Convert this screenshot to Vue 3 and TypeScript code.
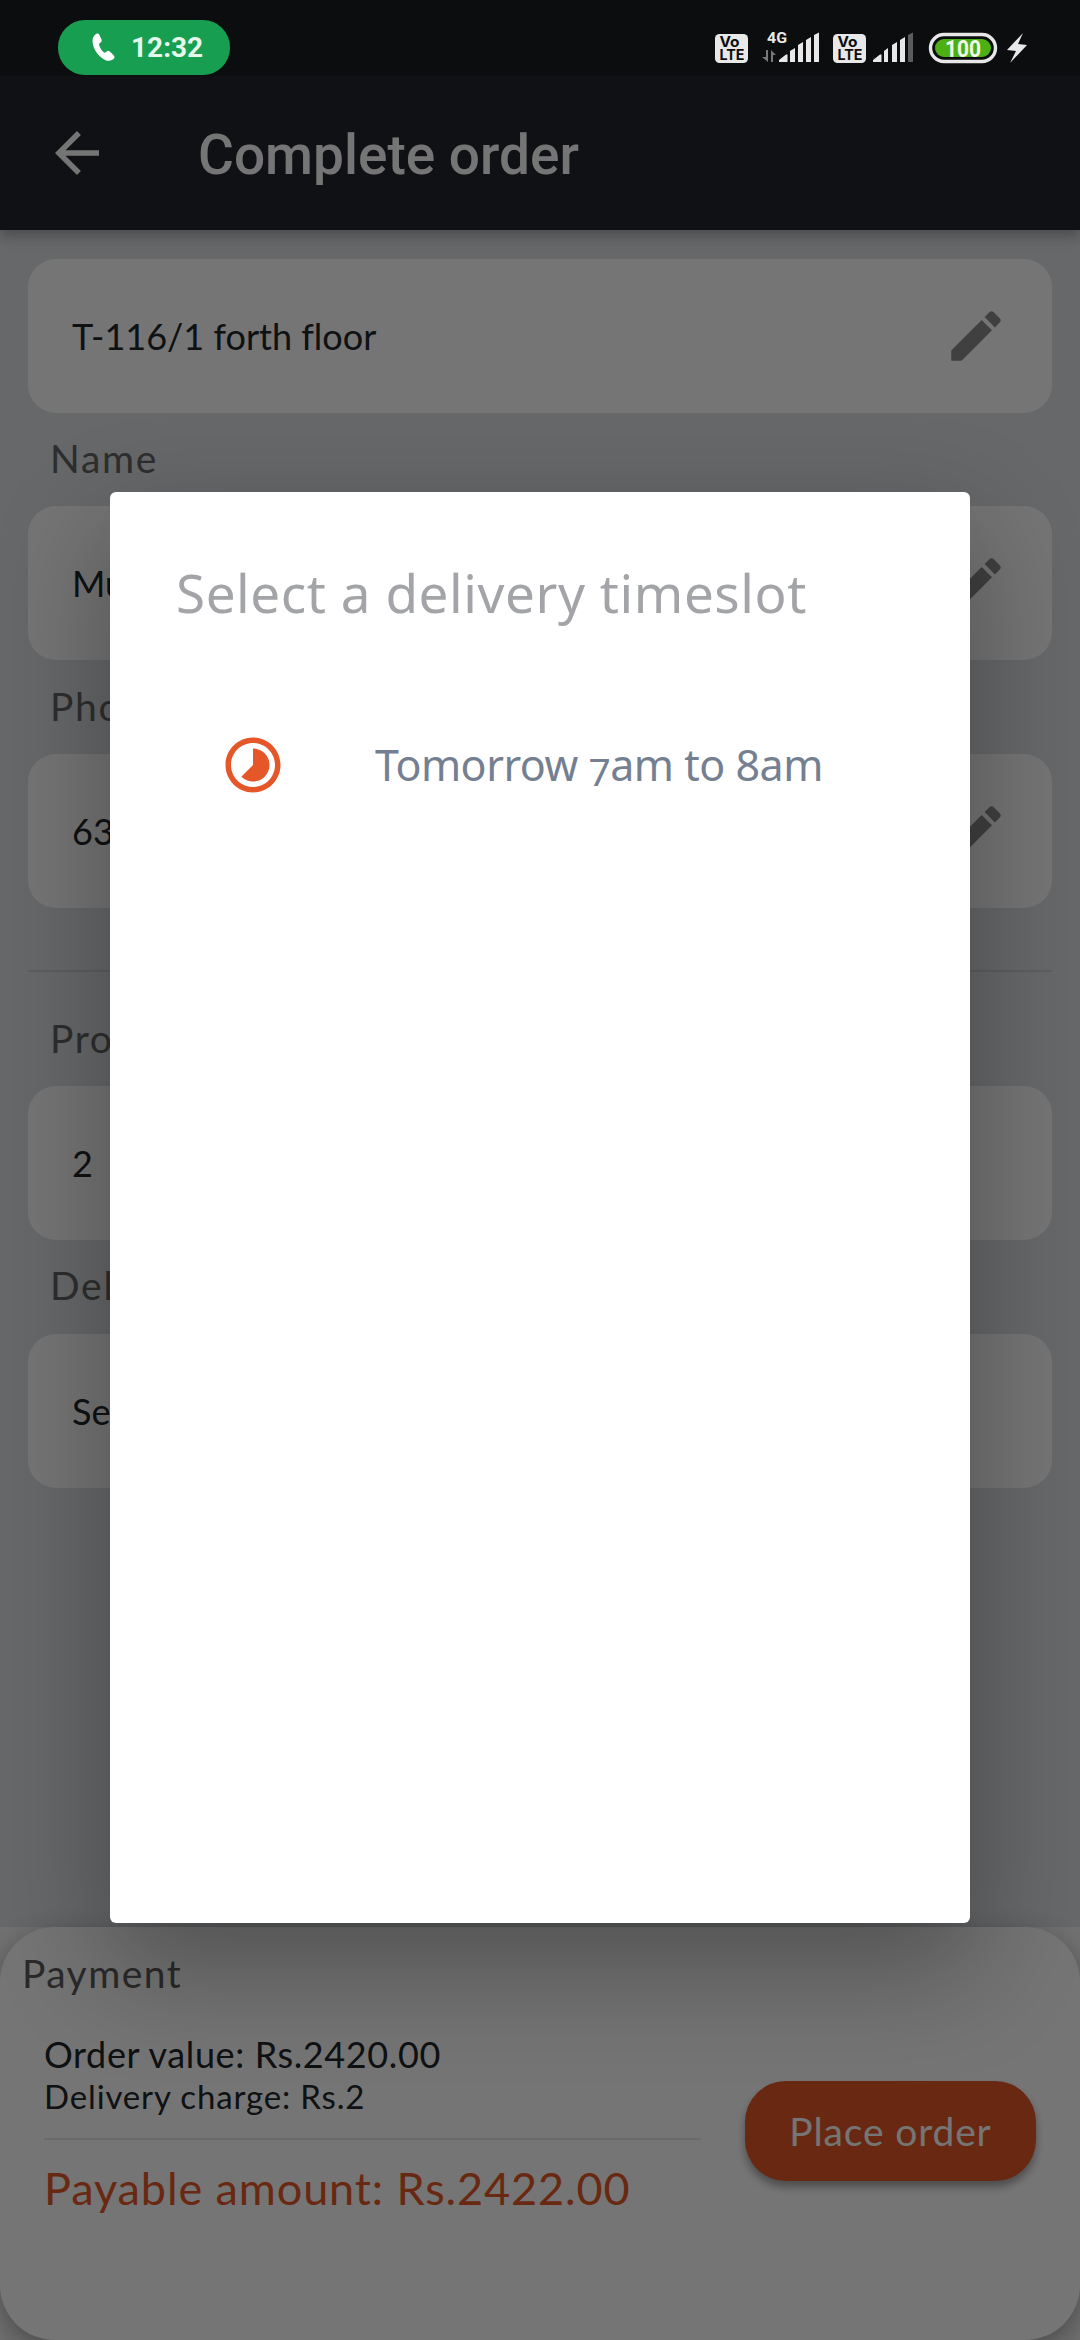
<script setup lang="ts">
interface Field {
  label?: string
  value: string
  editable: boolean
  ruled?: boolean
}

const fields: Field[] = [
  { value: 'T-116/1 forth floor', editable: true },
  { label: 'Name', value: 'Mu', editable: true },
  { label: 'Phone', value: '63', editable: true },
  { label: 'Products', value: '2', editable: false, ruled: true },
  { label: 'Delivery', value: 'Select', editable: false },
]
</script>

<template>
  <div class="screen">
    <div class="status">
      <div class="call">
        <svg width="24" height="30" viewBox="0 0 24 30">
          <path d="M2.6 2.2C4.6-.2 6.6.1 7.6 2.2l1.9 4.4c.5 1.5-.1 2.4-1.300 3.200-1.300.8-1.300 1.600-.8 3 .9 2.600 2.100 4.600 4 6.200 1 .9 1.700 1 2.700.1l.6-.6c1-.9 2.100-.8 3.100 0l3.600 3.600c1.600 1.700 1.400 3.200-.6 4.400-3.300 1.900-6.600 1.500-10.200-1.100C4.600 21.100 1.300 15.400.6 9.200.3 6.400.9 4.100 2.600 2.200z" fill="#fff" />
        </svg>
        <span>12:32</span>
      </div>
      <svg class="tray" width="320" height="40" viewBox="712 28 320 40">
        <g v-for="x in [715, 833]" :key="x">
          <rect :x="x" y="34" width="33" height="29" rx="4.500" fill="#e8e8e8" />
          <text :x="x + 4.500" y="46.500" class="volte" textLength="20" lengthAdjust="spacingAndGlyphs">Vo</text>
          <text :x="x + 4.500" y="60" class="volte" textLength="25" lengthAdjust="spacingAndGlyphs">LTE</text>
        </g>
        <text x="767" y="43" class="net" textLength="20" lengthAdjust="spacingAndGlyphs">4G</text>
        <path d="M768 50v12l-6-5h4v-7zM771 62V50l5 5h-3v7z" fill="#76787a" />
        <g fill="#e8e8e8">
          <path d="M779 62v-2l7-5.500h1.500V62zM790 62V51l5-3v14zM798 62V45l5-3v20zM806 62V40l5-3v25zM814 62V35l5-2.500V62z" />
          <path d="M873 62v-2l7-5.500h1.500V62zM884 62V51l4-3v14zM892 62V45l5-3v20zM900 62V40l5-3v25z" />
          <path d="M1023 33l-16 17 9 1-6 12 17-18-9-1z" />
        </g>
        <path d="M908 62V35l5-2.500V62z" fill="#5a5b5d" />
        <rect x="930.500" y="34.500" width="65" height="27" rx="13.500" fill="#0b0d0e" stroke="#e8e8e8" stroke-width="3.400" />
        <rect x="935" y="39" width="56" height="18" rx="9" fill="#4cb014" />
        <text x="945" y="56.500" class="charge" textLength="36" lengthAdjust="spacingAndGlyphs">100</text>
      </svg>
    </div>

    <header class="appbar">
      <svg width="66" height="66" viewBox="0 0 24 24">
        <path d="M20 11H7.830l5.590-5.590L12 4l-8 8 8 8 1.410-1.410L7.830 13H20v-2z" fill="#fff" />
      </svg>
      <h1>Complete order</h1>
    </header>

    <main class="form">
      <template v-for="(f, i) in fields" :key="i">
        <div v-if="f.ruled" class="rule"></div>
        <div v-if="f.label" class="label">{{ f.label }}</div>
        <div class="card">
          <span>{{ f.value }}</span>
          <svg v-if="f.editable" width="66" height="66" viewBox="0 0 24 24">
            <path d="M3 17.250V21h3.750L17.810 9.940l-3.750-3.750L3 17.250zM20.710 7.040c.39-.39.39-1.020 0-1.410l-2.340-2.340c-.39-.39-1.020-.39-1.410 0l-1.830 1.830 3.750 3.750 1.830-1.830z" fill="#8c8c8c" />
          </svg>
        </div>
      </template>
    </main>

    <footer class="dock">
      <section class="sheet">
        <h2>Payment</h2>
        <div class="pay">
          <div class="sums">
            <div class="order">Order value: Rs.2420.00</div>
            <div class="delivery">Delivery charge: Rs.2</div>
            <div class="total">Payable amount: Rs.2422.00</div>
          </div>
          <button type="button">Place order</button>
        </div>
      </section>
    </footer>

    <div class="scrim"></div>
    <div class="dialog">
      <h3>Select a delivery timeslot</h3>
      <div class="slot">
        <svg width="66" height="66" viewBox="0 0 24 24">
          <path d="M16.240 7.760C15.070 6.590 13.540 6 12 6v6l-4.240 4.240c2.340 2.340 6.140 2.340 8.490 0 2.340-2.340 2.340-6.140-.01-8.480zM12 2C6.480 2 2 6.480 2 12s4.480 10 10 10 10-4.480 10-10S17.520 2 12 2zm0 18c-4.420 0-8-3.580-8-8s3.580-8 8-8 8 3.580 8 8-3.580 8-8 8z" fill="#e55729" />
        </svg>
        <span>Tomorrow <span class="seven">7</span>am to 8am</span>
      </div>
    </div>
  </div>
</template>

<style>
body {
  margin: 0;
}
</style>

<style scoped>
.screen {
  position: relative;
  width: 1080px;
  height: 2340px;
  overflow: hidden;
  display: flex;
  flex-direction: column;
  background: #dfe3e6;
  font-family: Lato, 'Open Sans', sans-serif;
  font-variant-ligatures: none;
  color: #212529;
}

h1,
h2,
h3 {
  margin: 0;
  font-weight: 400;
}

.status {
  position: relative;
  z-index: 3;
  flex: none;
  height: 76px;
  box-sizing: border-box;
  padding: 20px 48px 0 58px;
  display: flex;
  justify-content: space-between;
  align-items: flex-start;
  background: #0b0d0e;
}

.call {
  width: 172px;
  height: 55px;
  box-sizing: border-box;
  padding-left: 34px;
  border-radius: 27px;
  display: flex;
  align-items: center;
  gap: 15px;
  background: #189e50;
  color: #e4f8ec;
  font: 700 28px/55px Roboto, sans-serif;
}

.tray {
  margin-top: 8px;
}

.volte {
  font: 700 14px Inter, sans-serif;
  fill: #0b0d0e;
}

.net {
  font: 700 15.500px Roboto, sans-serif;
  fill: #e8e8e8;
}

.charge {
  font: 700 24px Roboto, sans-serif;
  fill: #f2fbe9;
}

.appbar {
  position: relative;
  z-index: 1;
  flex: none;
  height: 154px;
  display: flex;
  align-items: center;
  padding-left: 44px;
  background: #22252e;
  color: #fff;
  box-shadow: 0 5px 11px rgba(0, 0, 0, 0.2), 0 11px 14px rgba(0, 0, 0, 0.08);
}

.appbar h1 {
  margin-left: 88px;
  padding-top: 3px;
  font: 500 55px/72px Roboto, sans-serif;
}

.form {
  flex: 1;
  padding: 29px 28px 0;
}

.label {
  height: 93.400px;
  box-sizing: border-box;
  padding: 0 0 3px 22px;
  display: flex;
  align-items: center;
  font-size: 39px;
  letter-spacing: 1.700px;
  color: #646464;
}

.card {
  height: 154px;
  box-sizing: border-box;
  padding: 0 43px 0 44px;
  border-radius: 28px;
  display: flex;
  align-items: center;
  justify-content: space-between;
  background: #fff;
  font-size: 36px;
}

.rule {
  height: 62px;
  margin-bottom: 21px;
  border-bottom: 2px solid #cdd0d0;
}

.dock {
  flex: none;
  height: 413px;
  background: #f8f8f8;
}

.sheet {
  height: 413px;
  box-sizing: border-box;
  padding: 19px 44px 0 22px;
  border-radius: 55px;
  background: #fff;
  box-shadow: 0 10px 30px rgba(0, 0, 0, 0.35);
}

.sheet h2 {
  font-size: 39px;
  line-height: 54px;
  letter-spacing: 1.450px;
  color: #5c5c5c;
}

.pay {
  margin-top: 32px;
  padding-left: 22px;
  display: flex;
  justify-content: space-between;
}

.sums {
  width: 657px;
}

.order {
  font-size: 36px;
  line-height: 44px;
  letter-spacing: 0.620px;
}

.delivery {
  height: 62px;
  border-bottom: 2px solid #e8e8e8;
  font-size: 33px;
  line-height: 40px;
  letter-spacing: 0.850px;
}

.total {
  margin-top: 21px;
  font-size: 45px;
  line-height: 54px;
  letter-spacing: 0.900px;
  color: #e55729;
}

button {
  width: 291px;
  height: 100px;
  margin-top: 49px;
  padding: 0;
  border: 0;
  border-radius: 41px;
  background: #e55729;
  color: #fff;
  font: 400 39px/98px Lato, sans-serif;
  letter-spacing: 0.850px;
  box-shadow: 0 6px 9px rgba(0, 0, 0, 0.35);
}

.scrim {
  position: absolute;
  inset: 0;
  z-index: 2;
  background: rgba(0, 0, 0, 0.54);
}

.dialog {
  position: absolute;
  z-index: 4;
  left: 110px;
  top: 492.300px;
  width: 860px;
  height: 1431px;
  box-sizing: border-box;
  padding: 65px 66px 0;
  border-radius: 6px;
  background: #fff;
  box-shadow: 0 42px 110px 5px rgba(0, 0, 0, 0.3);
  font-family: 'Noto Sans', sans-serif;
}

.dialog h3 {
  font-size: 53px;
  line-height: 72px;
  letter-spacing: 0.560px;
  white-space: nowrap;
  color: #a3a4a7;
}

.slot {
  margin-top: 103px;
  padding-left: 44px;
  display: flex;
  align-items: center;
  gap: 89px;
  font-size: 43px;
  line-height: 64px;
  letter-spacing: -0.500px;
  white-space: nowrap;
  color: #748091;
}

.seven {
  font-size: 39px;
  line-height: 1;
  vertical-align: -5px;
}
</style>
